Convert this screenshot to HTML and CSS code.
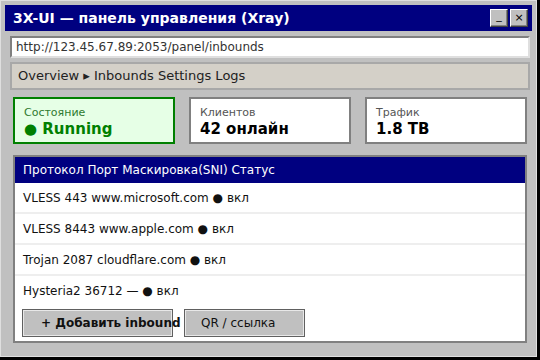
FILE: index.html
```html
<!DOCTYPE html>
<html lang="ru">
<head>
    <meta charset="UTF-8">
    <meta name="viewport" content="width=device-width, initial-scale=1.0">
    <title>3X-UI</title>
    <link rel="stylesheet" href="styles.css">
</head>
<body>
    <div class="window">
        <div class="titlebar">
            <span class="title">3X-UI — панель управления (Xray)</span>
            <div class="title-buttons">
                <span class="tbtn min">_</span>
                <span class="tbtn">×</span>
            </div>
        </div>

        <div class="address">http://123.45.67.89:2053/panel/inbounds</div>

        <div class="nav">Overview ▸ Inbounds Settings Logs</div>

        <div class="stats">
            <div class="card ok">
                <div class="card-label">Состояние</div>
                <div class="card-value">● Running</div>
            </div>
            <div class="card">
                <div class="card-label">Клиентов</div>
                <div class="card-value">42 онлайн</div>
            </div>
            <div class="card">
                <div class="card-label">Трафик</div>
                <div class="card-value">1.8 TB</div>
            </div>
        </div>

        <div class="panel">
            <div class="row head">Протокол Порт Маскировка(SNI) Статус</div>
            <div class="row">VLESS 443 www.microsoft.com ● вкл</div>
            <div class="row">VLESS 8443 www.apple.com ● вкл</div>
            <div class="row">Trojan 2087 cloudflare.com ● вкл</div>
            <div class="row last">Hysteria2 36712 — ● вкл</div>
            <div class="actions">
                <button class="btn add">+ Добавить inbound</button>
                <button class="btn qr">QR / ссылка</button>
            </div>
        </div>
    </div>
</body>
</html>
```

FILE: styles.css
```css
body {
    margin: 0;
    background-color: #000;
    font-family: "DejaVu Sans", sans-serif;
}

/* window frame */
.window {
    width: 537px;
    height: 357px;
    box-sizing: border-box;
    border: 1px solid #dfdfdf;
    background-color: #c0c0c0;
    padding: 4px;
    display: flex;
    flex-direction: column;
}

.titlebar {
    height: 26px;
    background-color: #000080;
    color: #fff;
    display: flex;
    align-items: center;
    justify-content: space-between;
    padding: 0 4px 0 8px;
}

.title {
    font-weight: bold;
    font-size: 14px;
}

.title-buttons {
    display: flex;
    gap: 2px;
}

.tbtn {
    width: 18px;
    height: 18px;
    box-sizing: border-box;
    background-color: #c0c0c0;
    border: 1px solid;
    border-color: #fff #404040 #404040 #fff;
    box-shadow: inset -1px -1px #808080;
    color: #000;
    font-size: 11px;
    line-height: 15px;
    text-align: center;
}

.tbtn.min {
    line-height: 12px;
}

.address {
    margin: 5px 2px 0 5px;
    height: 22px;
    box-sizing: border-box;
    background-color: #fff;
    border: 2px solid;
    border-color: #808080 #dfdfdf #dfdfdf #808080;
    padding-left: 4px;
    font-size: 12px;
    line-height: 18px;
    color: #333;
}

.nav {
    margin: 4px 2px 0 5px;
    height: 28px;
    box-sizing: border-box;
    background-color: #d4d0c8;
    border: 2px solid #a8a8a8;
    padding-left: 6px;
    font-size: 13px;
    line-height: 24px;
    color: #222;
}

/* stat cards */
.stats {
    margin: 7px 5px 0 8px;
    display: flex;
    gap: 14px;
}

.card {
    flex: 1;
    height: 47px;
    box-sizing: border-box;
    background-color: #fff;
    border: 2px solid #808080;
    padding: 7px 9px 0;
}

.card.ok {
    background-color: #e6ffe6;
    border-color: #008000;
}

.card-label {
    font-size: 11px;
    line-height: 13px;
    color: #555;
}

.card-value {
    margin-top: 1px;
    font-size: 15px;
    line-height: 18px;
    font-weight: bold;
    color: #000;
}

.card.ok .card-label {
    color: #2e7a2e;
}

.card.ok .card-value {
    color: #008000;
}

/* inbounds table */
.panel {
    margin: 11px 5px 0 8px;
    height: 188px;
    box-sizing: border-box;
    background-color: #fff;
    border: 2px solid #808080;
}

.row {
    height: 31px;
    box-sizing: border-box;
    border-bottom: 2px solid #eee;
    padding-left: 8px;
    font-size: 12px;
    line-height: 30px;
    color: #111;
}

.row.head {
    height: 26px;
    line-height: 26px;
    border-bottom: none;
    background-color: #000080;
    color: #fff;
}

.row.last {
    border-bottom: none;
}

.actions {
    display: flex;
    gap: 11px;
    padding: 2px 0 0 7px;
}

.btn {
    flex: none;
    min-width: 0;
    height: 28px;
    box-sizing: border-box;
    background-color: #c0c0c0;
    border: 1px solid #606060;
    box-shadow: inset 0 0 0 1px #e8e8e8;
    padding: 0 0 0 18px;
    overflow: visible;
    text-align: left;
    white-space: nowrap;
    font-family: "DejaVu Sans", sans-serif;
    font-size: 12px;
    color: #111;
}

.btn.add {
    width: 151px;
    font-weight: bold;
}

.btn.qr {
    width: 121px;
    padding-left: 16px;
}
```
